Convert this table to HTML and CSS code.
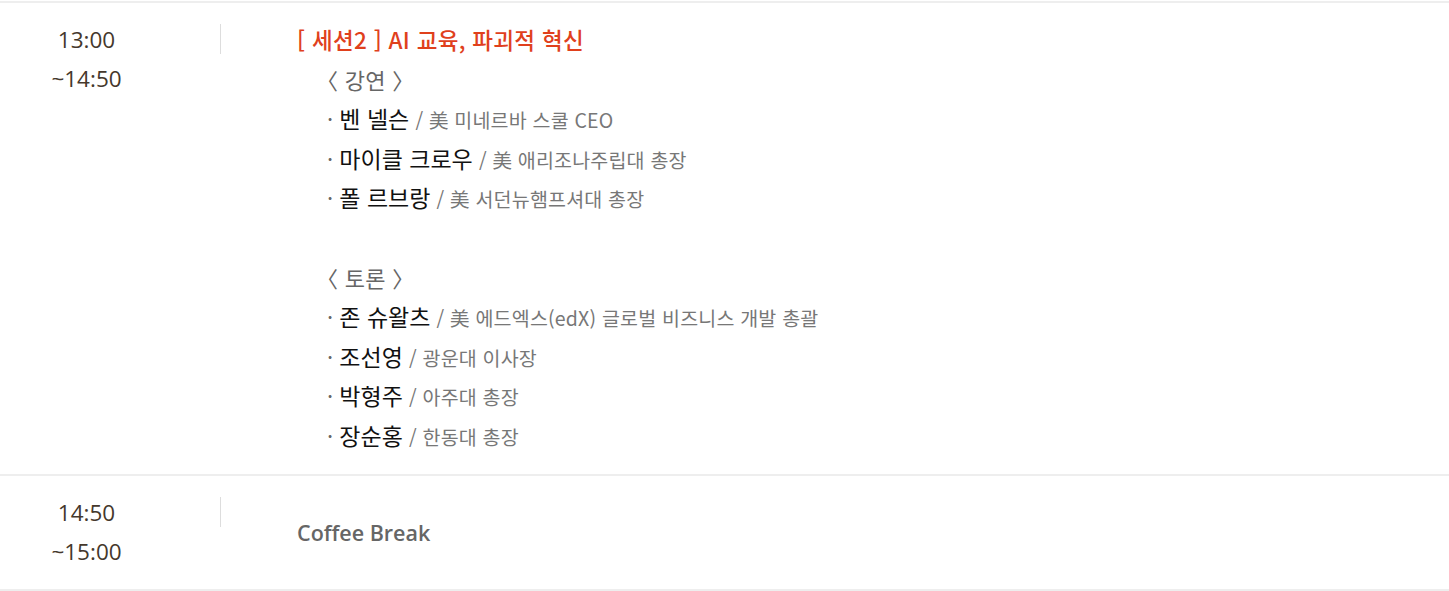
FILE: index.html
```html
<!DOCTYPE html>
<html lang="ko">
<head>
<meta charset="utf-8">
<link rel="stylesheet" href="styles.css">
</head>
<body>
<div class="table">
  <div class="row">
    <div class="time"><div>13:00</div><div>~14:50</div></div>
    <div class="divider"></div>
    <div class="content">
      <div class="line title">[ 세션2 ] AI 교육, 파괴적 혁신</div>
      <div class="line sub">〈 강연 〉</div>
      <div class="line item">· <span class="name">벤 넬슨</span> <span class="aff">/ 美 미네르바 스쿨 CEO</span></div>
      <div class="line item">· <span class="name">마이클 크로우</span> <span class="aff">/ 美 애리조나주립대 총장</span></div>
      <div class="line item">· <span class="name">폴 르브랑</span> <span class="aff">/ 美 서던뉴햄프셔대 총장</span></div>
      <div class="line blank"></div>
      <div class="line sub">〈 토론 〉</div>
      <div class="line item">· <span class="name">존 슈왈츠</span> <span class="aff">/ 美 에드엑스(edX) 글로벌 비즈니스 개발 총괄</span></div>
      <div class="line item">· <span class="name">조선영</span> <span class="aff">/ 광운대 이사장</span></div>
      <div class="line item">· <span class="name">박형주</span> <span class="aff">/ 아주대 총장</span></div>
      <div class="line item">· <span class="name">장순홍</span> <span class="aff">/ 한동대 총장</span></div>
    </div>
  </div>
  <div class="row row-break">
    <div class="time"><div>14:50</div><div>~15:00</div></div>
    <div class="divider"></div>
    <div class="content center">
      <div class="coffee">Coffee Break</div>
    </div>
  </div>
</div>
</body>
</html>
```

FILE: styles.css
```css
html, body {
  margin: 0;
  padding: 0;
  background: #fff;
}
body {
  font-family: "Noto Sans CJK KR", "Noto Sans", sans-serif;
  color: #222;
}
.table {
  padding-top: 1px;
}
.row {
  display: flex;
  border-top: 2px solid #eeeeee;
  padding: 17px 0 18px;
}
.row-break {
  border-bottom: 2px solid #eeeeee;
  padding: 17.5px 0 17.5px;
}
.time {
  width: 173px;
  text-align: center;
  font-family: "Open Sans", "Noto Sans", sans-serif;
  font-size: 22.5px;
  line-height: 39px;
  font-weight: 400;
  color: #45382c;
}
.divider {
  width: 1px;
  height: 30px;
  margin-top: 4px;
  margin-left: 47px;
  background: #dddddd;
}
.content {
  margin-left: 76px;
}
.content.center {
  display: flex;
  align-items: center;
}
.line {
  height: 39.6px;
  line-height: 39.6px;
  white-space: nowrap;
}
.line span {
  line-height: 1;
}
.title {
  color: #e0401c;
  font-weight: 500;
  font-size: 22.5px;
  letter-spacing: 0.3px;
}
.sub {
  padding-left: 19px;
  color: #666;
  font-size: 22px;
  letter-spacing: 0.3px;
}
.item {
  padding-left: 30px;
  color: #666;
  font-size: 22px;
}
.name {
  color: #111;
  font-size: 23px;
}
.aff {
  color: #777;
  font-size: 19.5px;
  letter-spacing: 0.2px;
}
.coffee {
  font-family: "Open Sans", "Noto Sans", sans-serif;
  font-weight: 600;
  font-size: 21.5px;
  color: #666;
}
```
